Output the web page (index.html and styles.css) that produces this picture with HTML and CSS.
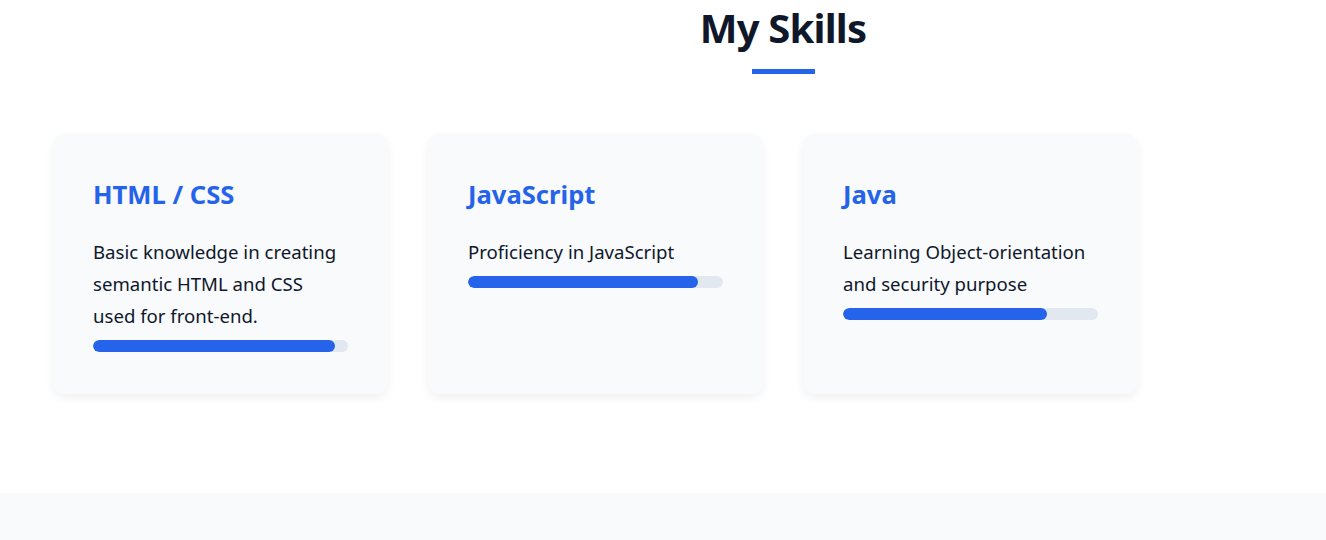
FILE: index.html
```html
<!DOCTYPE html>
<html lang="en">
<head>
<meta charset="utf-8">
<title>My Skills</title>
<link rel="stylesheet" href="styles.css">
</head>
<body>
<section class="skills">
  <div class="container">
    <h2 class="section-title">My Skills</h2>
    <div class="grid">
      <div class="card">
        <h3 class="card-title">HTML / CSS</h3>
        <p class="card-text">Basic knowledge in creating semantic HTML and CSS used for front-end.</p>
        <div class="bar"><div class="fill" style="width:95%"></div></div>
      </div>
      <div class="card">
        <h3 class="card-title">JavaScript</h3>
        <p class="card-text">Proficiency in JavaScript</p>
        <div class="bar"><div class="fill" style="width:90%"></div></div>
      </div>
      <div class="card">
        <h3 class="card-title">Java</h3>
        <p class="card-text">Learning Object-orientation and security purpose</p>
        <div class="bar"><div class="fill" style="width:80%"></div></div>
      </div>
    </div>
  </div>
</section>
<section class="next"></section>
</body>
</html>
```
FILE: styles.css
```css
html, body {
  margin: 0;
  padding: 0;
  overflow-x: hidden;
  background: #ffffff;
  font-family: "Noto Sans", "Open Sans", sans-serif;
  color: #0f172a;
}
.skills {
  padding: 0 0 99px 53px;
}
.container {
  width: 1460px;
}
.section-title {
  margin: 0;
  padding-top: 2px;
  text-align: center;
  font-size: 40px;
  line-height: 52px;
  font-weight: 700;
  letter-spacing: -0.8px;
  color: #0f172a;
}
.section-title::after {
  content: "";
  display: block;
  width: 63px;
  height: 5px;
  margin: 15px auto 0;
  background: #2563eb;
}
.grid {
  margin-top: 60px;
  display: grid;
  grid-template-columns: repeat(4, 335px);
  gap: 40px;
}
.card {
  background: #f8fafc;
  border-radius: 12px;
  padding: 40px;
  box-shadow: 0 4px 10px rgba(15, 23, 42, 0.06);
  min-height: 180px;
}
.card-title {
  margin: 0 0 20px;
  font-size: 25.6px;
  line-height: 42px;
  font-weight: 700;
  color: #2563eb;
}
.card-text {
  margin: 0;
  font-size: 18.6px;
  line-height: 32px;
  color: #0f172a;
}
.bar {
  margin-top: 8px;
  height: 12px;
  border-radius: 6px;
  background: #e2e8f0;
  overflow: hidden;
}
.fill {
  height: 100%;
  border-radius: 6px;
  background: #2563eb;
}
.next {
  height: 200px;
  background: #f8fafc;
}
```
